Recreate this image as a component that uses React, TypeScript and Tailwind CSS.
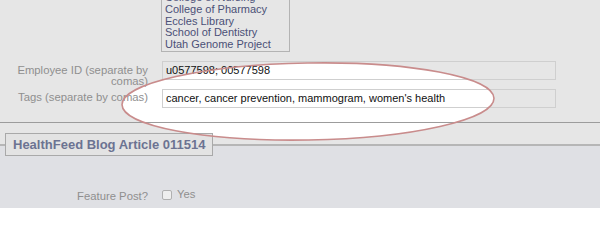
import React from "react";

const font = { fontFamily: '"Liberation Sans", Arial, sans-serif' };

export default function App() {
  return (
    <div
      className="relative w-[600px] h-[208px] overflow-hidden bg-[#e6e6e6] text-[11px]"
      style={font}
    >
      {/* highlight fill under content */}
      <svg className="absolute left-0 top-0 z-0" width="600" height="208">
        <ellipse cx="308" cy="101.5" rx="186" ry="38.5" fill="#ffffff" transform="rotate(-1 308 101.5)" />
      </svg>

      <div className="relative z-10 flex flex-col">
        {/* top section */}
        <div className="h-[123px] border-b border-[#9c9c9c] flex flex-col">
          <div className="ml-[161px] mt-[-10px] w-[129px] border border-[#b3b3b3] px-[3px] pt-[1px] text-[#4b5077] leading-[11.8px]">
            <div>College of Nursing</div>
            <div>College of Pharmacy</div>
            <div>Eccles Library</div>
            <div>School of Dentistry</div>
            <div>Utah Genome Project</div>
          </div>

          <div className="flex mt-[9px] h-[28px]">
            <div className="w-[149px] pr-[1px] text-right text-[#8f8f8f] text-[11.3px] leading-[11px] pt-[4px]">
              Employee ID (separate by
              <br />
              comas)
            </div>
            <div className="ml-[13px] w-[394px] h-[19px] border border-[#cfcfcf] px-[3px] leading-[17px] text-[#111]">
              u0577598; 00577598
            </div>
          </div>

          <div className="flex">
            <div className="w-[149px] pr-[1px] text-right text-[#8f8f8f] text-[11.3px] leading-[11.5px] pt-[3px]">
              Tags (separate by comas)
            </div>
            <div className="ml-[13px] w-[394px] h-[19px] border border-[#cfcfcf] px-[3px] leading-[17px] text-[#111]">
              cancer, cancer prevention, mammogram, women's health
            </div>
          </div>
        </div>

        {/* fieldset */}
        <fieldset className="mt-[10px] border-0 border-t-2 border-[#b6b6b6] bg-[#dfe0e4] h-[80px] min-w-0">
          <legend className="ml-[5px] border border-[#a9a9a9] bg-[#e3e3e3] px-[7px] h-[23px] leading-[21px] text-[13px] font-bold text-[#6c7392]">
            HealthFeed Blog Article 011514
          </legend>
          <div className="flex items-start mt-[34px]">
            <div className="w-[149px] pr-[1px] text-right text-[#8f8f8f] text-[11.3px] leading-[14px] mt-[-1px]">
              Feature Post?
            </div>
            <div className="ml-[13px] w-[10px] h-[10px] border border-[#b0b0b0] rounded-[2px] bg-[#eeeeee]" />
            <div className="ml-[5px] text-[#8f8f8f] text-[11.3px] leading-[14px] mt-[-3px]">Yes</div>
          </div>
        </fieldset>
      </div>

      {/* ellipse stroke over content */}
      <svg className="absolute left-0 top-0 z-20 pointer-events-none" width="600" height="208">
        <ellipse
          cx="308"
          cy="101.5"
          rx="186"
          ry="38.5"
          fill="none"
          stroke="#c98c8c"
          strokeWidth="1.6"
          transform="rotate(-1 308 101.5)"
        />
      </svg>
    </div>
  );
}
